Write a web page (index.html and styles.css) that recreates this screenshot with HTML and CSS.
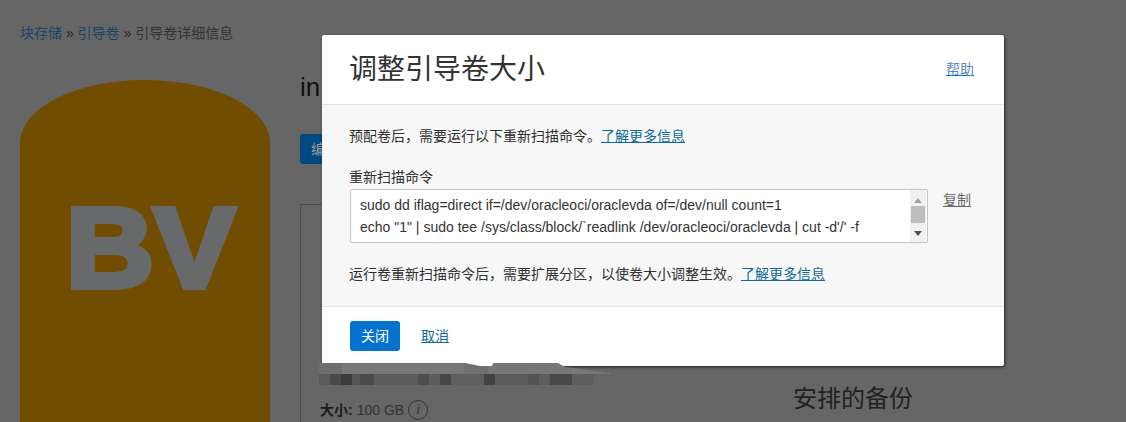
FILE: index.html
```html
<!DOCTYPE html>
<html lang="zh">
<head>
<meta charset="utf-8">
<title>调整引导卷大小</title>
<link rel="stylesheet" href="styles.css">
</head>
<body>
<div class="page">
  <nav class="crumbs"><a>块存储</a> <span class="sep">»</span> <a>引导卷</a> <span class="sep">»</span> 引导卷详细信息</nav>
  <div class="detail">
    <svg class="bv" viewBox="0 0 250 350" aria-hidden="true">
      <path d="M0 63C0 28 56 0 125 0s125 28 125 63V350H0Z" fill="#704d00"/>
      <text x="46" y="207" textLength="169" lengthAdjust="spacingAndGlyphs" class="bv-text">BV</text>
    </svg>
    <div class="main">
      <h1 class="vol-title">in</h1>
      <div class="actions"><span class="edit">编辑</span></div>
      <div class="panel">
        <p class="size"><b>大小:</b> 100 GB <span class="info">i</span></p>
      </div>
    </div>
  </div>
  <h2 class="backup">安排的备份</h2>
  <div class="smear"></div>
  <div class="mosaic"></div>
</div>

<section class="modal">
  <header class="m-head">
    <h2>调整引导卷大小</h2>
    <a class="help">帮助</a>
  </header>
  <div class="m-body">
    <p class="intro">预配卷后，需要运行以下重新扫描命令。<a class="link">了解更多信息</a></p>
    <label class="cmd-label">重新扫描命令</label>
    <div class="cmd-row">
      <div class="cmd">
        <div class="cmd-text">sudo dd iflag=direct if=/dev/oracleoci/oraclevda of=/dev/null count=1<br>echo "1" | sudo tee /sys/class/block/`readlink /dev/oracleoci/oraclevda | cut -d'/' -f</div>
        <div class="scroll">
          <svg class="arrow" viewBox="0 0 8 5"><path d="M4 0l4 5H0z" fill="#a3a3a3"/></svg>
          <div class="track"><div class="thumb"></div></div>
          <svg class="arrow" viewBox="0 0 8 5"><path d="M0 0h8L4 5z" fill="#505050"/></svg>
        </div>
      </div>
      <a class="copy">复制</a>
    </div>
    <p class="after">运行卷重新扫描命令后，需要扩展分区，以使卷大小调整生效。<a class="link">了解更多信息</a></p>
  </div>
  <footer class="m-foot">
    <button class="primary">关闭</button>
    <a class="link cancel">取消</a>
  </footer>
</section>
</body>
</html>
```

FILE: styles.css
```css
* { box-sizing: border-box; }
html, body { margin: 0; height: 422px; overflow: hidden; }
body {
  background: #666;
  color: #1c1c1c;
  font: 14px/20px "Liberation Sans", "Noto Sans CJK SC", sans-serif;
  position: relative;
}
a { text-decoration: none; }
p, h1, h2 { margin: 0; font-weight: 400; }

.page { padding: 23px 0 0 20px; height: 422px; overflow: hidden; position: relative; }
.crumbs { color: #333; height: 20px; }
.crumbs a { color: #1a4566; }
.sep { color: #222; }
.detail { display: flex; gap: 30px; margin-top: 37px; }
.bv { width: 250px; height: 350px; flex: none; }
.bv-text { font: 700 114px "Liberation Sans", sans-serif; fill: #68696b; stroke: #68696b; stroke-width: 6px; stroke-linejoin: miter; }
.main { flex: 1; min-width: 0; }
.vol-title { font-size: 26px; line-height: 30px; color: #111; margin-top: -8px; height: 30px; }
.actions { margin-top: 32px; height: 30px; }
.edit { display: inline-block; width: 60px; height: 30px; background: #004a82; border-radius: 3px; color: #999; line-height: 30px; padding-left: 11px; }
.panel { margin-top: 40px; width: 700px; height: 260px; border: 1px solid #4f4f4f; border-width: 1px 0 0 1px; padding: 194px 0 0 19px; }
.size { color: #333; line-height: 22px; white-space: nowrap; display: flex; align-items: center; gap: 4px; }
.size b { font-weight: 700; color: #1c1c1c; }
.info { width: 20px; height: 20px; border: 1px solid #333; border-radius: 50%; text-align: center; font: italic 14px/18px "Liberation Serif", serif; }
.backup { position: absolute; left: 793px; top: 384px; font-size: 24px; line-height: 30px; color: #222; }
.smear {
  position: absolute; z-index: 1; left: 319px; top: 363px; width: 291px; height: 11px;
  background: linear-gradient(90deg, #6e6e6e 0 8%, #787878 8% 50%, #707070 50% 58%, #777 58% 100%);
  clip-path: polygon(0 0, 146px 0, 161px 3px, 173px 3px, 174px 0, 239px 0, 246px 4px, 291px 10px, 291px 11px, 0 11px);
}
.mosaic {
  position: absolute; z-index: 1; left: 319px; top: 374px; width: 275px; height: 11px;
  background: linear-gradient(90deg, #5a5a5a 0 4%, #4a4a4a 4% 8%, #3c3c3c 8% 12%, #555 12% 15%, #4b4b4b 15% 20%, #5c5c5c 20% 36%, #4e4e4e 36% 40%, #5c5c5c 40% 44%, #474747 44% 48%, #5f5f5f 48% 60%, #434343 60% 64%, #5c5c5c 64% 76%, #535353 76% 80%, #5d5d5d 80% 84%, #494949 84% 92%, #5e5e5e 92% 100%);
}

.modal {
  position: absolute; left: 322px; top: 35px; width: 682px; height: 331px;
  background: #fff; border-radius: 2px;
  box-shadow: 1px 1px 3px rgba(0,0,0,.65);
  display: flex; flex-direction: column;
}
.m-head { height: 70px; padding: 0 30px 0 27px; display: flex; justify-content: space-between; align-items: center; border-bottom: 1px solid #e4e4e4; }
.m-head h2 { font-size: 28px; line-height: 40px; color: #333; }
.help { color: #5d86b8; text-decoration: underline; text-decoration-color: #0572ce; margin-bottom: 2px; }
.m-body { height: 202px; background: #f7f7f7; padding: 21px 28px 0 27px; border-bottom: 1px solid #e4e4e4; }
.intro { height: 20px; color: #303030; }
.link { color: #0f6a99; text-decoration: underline; }
.cmd-label { display: block; margin-top: 21px; height: 20px; color: #303030; }
.cmd-row { display: flex; align-items: flex-start; margin: 2px 0 0 1px; }
.cmd { width: 578px; height: 54px; background: #fff; border: 1px solid #c4c4c4; border-radius: 2px; display: flex; flex: none; }
.cmd-text { flex: 1; min-width: 0; padding: 5px 0 0 9px; line-height: 21.5px; color: #333; white-space: nowrap; overflow: hidden; }
.scroll { width: 16px; margin-right: 1px; background: #f1f1f1; display: flex; flex-direction: column; align-items: center; justify-content: space-between; padding: 8px 0 6px; }
.arrow { width: 8px; height: 5px; display: block; }
.track { flex: 1; width: 100%; padding: 3px 1px 0; }
.thumb { height: 17px; background: #bdbdbd; }
.copy { margin: 1px 0 0 15px; color: #666; text-decoration: underline; }
.after { margin-top: 21px; height: 20px; color: #303030; }
.m-foot { flex: 1; padding: 14px 28px 0; display: flex; align-items: flex-start; gap: 21px; }
.primary { width: 50px; height: 30px; padding: 0; border: 0; border-radius: 3px; background: #0572ce; color: #fff; font: 14px/30px "Liberation Sans", "Noto Sans CJK SC", sans-serif; }
.cancel { line-height: 30px; }
```
